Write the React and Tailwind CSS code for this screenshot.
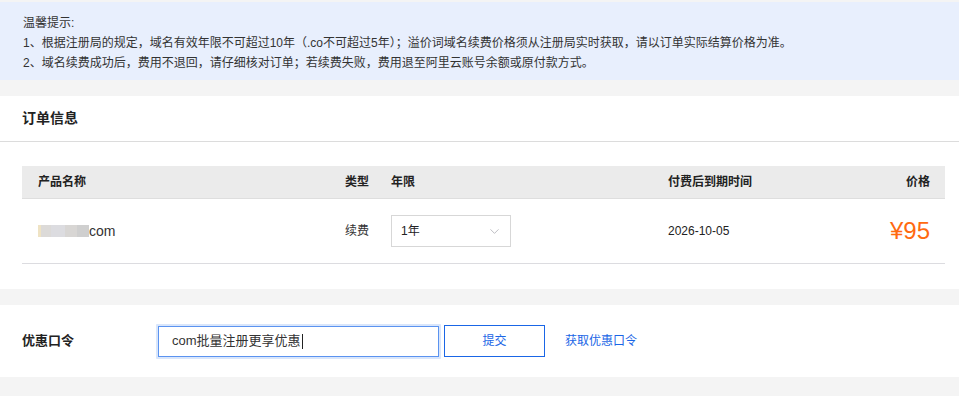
import { ChevronDown } from 'lucide-react'

/*
 * Domain renewal checkout: notice banner, order info table, coupon code row.
 */

const FONT = { fontFamily: '"Liberation Sans", Arial, "Noto Sans CJK SC", sans-serif' }

function Notice() {
  return (
    <div className="mt-[2px] h-[78px] bg-[#e8effd] px-[23px] pt-[11px] text-[12px] leading-[20px] text-[#333]">
      <p>温馨提示:</p>
      <p>1、根据注册局的规定，域名有效年限不可超过10年（.co不可超过5年）；溢价词域名续费价格须从注册局实时获取，请以订单实际结算价格为准。</p>
      <p>2、域名续费成功后，费用不退回，请仔细核对订单；若续费失败，费用退至阿里云账号余额或原付款方式。</p>
    </div>
  )
}

/** Blurred-out domain prefix, drawn as soft grey blocks. */
function MaskedName() {
  return (
    <span className="flex h-[12px] items-stretch">
      <span className="w-[3px] bg-[#efe3c4]" />
      <span className="w-[10px] bg-[#dcdad8]" />
      <span className="w-[14px] bg-[#dcdce0]" />
      <span className="w-[12px] bg-[#d8d6d4]" />
      <span className="w-[12px] bg-[#cfcfcf]" />
    </span>
  )
}

function OrderInfo() {
  return (
    <section className="mt-[16px] h-[193px] bg-white">
      <div className="flex h-[46px] items-center border-b border-[#dcdcdc] px-[22px] text-[14px] font-bold text-[#222]">
        订单信息
      </div>
      <div className="mx-[22px] mt-[24px] mr-[14px]">
        <div className="flex h-[33px] items-center border-b border-[#dedede] bg-[#ebebeb] text-[12px] font-bold text-[#222]">
          <div className="w-[323px] pl-[16px]">产品名称</div>
          <div className="w-[46px]">类型</div>
          <div className="w-[277px]">年限</div>
          <div className="flex-1">付费后到期时间</div>
          <div className="pr-[15px]">价格</div>
        </div>
        <div className="flex h-[65px] items-center border-b border-[#dcdce0] text-[12px] text-[#333]">
          <div className="flex w-[323px] items-center pl-[16px]">
            <MaskedName />
            <span className="text-[14px] text-[#333]">com</span>
          </div>
          <div className="w-[46px]">续费</div>
          <div className="w-[277px]">
            <div className="flex h-[32px] w-[120px] items-center justify-between border border-[#d7d7d7] pl-[9px] pr-[8px] text-[12px] text-[#222]">
              <span>1年</span>
              <ChevronDown size={15} strokeWidth={1.1} className="text-[#a0a0a8]" />
            </div>
          </div>
          <div className="flex-1 text-[#222]">2026-10-05</div>
          <div className="pr-[15px] text-[24px] leading-none text-[#ff6a10]">¥95</div>
        </div>
      </div>
    </section>
  )
}

function Coupon() {
  return (
    <section className="mt-[16px] flex h-[72px] items-center bg-white px-[22px]">
      <div className="w-[134px] text-[13px] font-bold text-[#222]">优惠口令</div>
      <div className="rounded-[1px] bg-[#d9e6fb] p-[2px]">
        <div className="flex h-[31px] w-[281px] items-center border border-[#5b93f0] bg-white pl-[13px] text-[13px] text-[#333]">
          com批量注册更享优惠<span className="ml-[1px] h-[15px] w-px bg-[#222]" />
        </div>
      </div>
      <button
        type="button"
        className="ml-[3px] h-[32px] w-[101px] border border-[#1a66e6] bg-white text-[12px] text-[#1a66e6]"
      >
        提交
      </button>
      <a className="ml-[20px] text-[12px] text-[#1a66e6]">获取优惠口令</a>
    </section>
  )
}

export default function App() {
  return (
    <div className="h-[396px] w-[959px] overflow-hidden bg-[#f4f4f4]" style={FONT}>
      <Notice />
      <OrderInfo />
      <Coupon />
    </div>
  )
}
